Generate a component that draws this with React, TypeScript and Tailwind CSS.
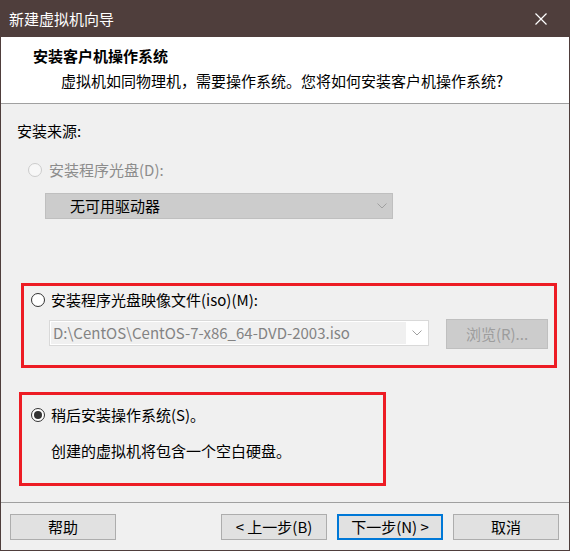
import React from "react";

const font = { fontFamily: '"Microsoft YaHei", "Noto Sans CJK SC", "Noto Sans", sans-serif' };

function Chevron() {
  return (
    <svg width="10" height="6" viewBox="0 0 10 6" className="shrink-0">
      <path d="M0.5 0.5 L5 5 L9.5 0.5" fill="none" stroke="#a0a0a0" strokeWidth="1" />
    </svg>
  );
}

function Radio({ checked = false, disabled = false }: { checked?: boolean; disabled?: boolean }) {
  return (
    <span
      className={
        "w-[14px] h-[14px] rounded-full border flex items-center justify-center shrink-0 " +
        (disabled ? "border-[#cccccc] bg-[#f7f7f7]" : "border-[#333333] bg-white")
      }
    >
      {checked && <span className="w-[8px] h-[8px] rounded-full bg-[#333333]" />}
    </span>
  );
}

function Btn({ children, primary = false }: { children: React.ReactNode; primary?: boolean }) {
  return (
    <div
      className={
        "w-[106px] h-[26px] flex items-center justify-center text-[15px] leading-[20px] text-black bg-[#e1e1e1] " +
        (primary ? "border-2 border-[#0078d7]" : "border border-[#adadad]")
      }
    >
      {children}
    </div>
  );
}

export default function App() {
  return (
    <div
      className="w-[570px] h-[551px] flex flex-col bg-[#f0f0f0] border border-[#4f3e3c] overflow-hidden"
      style={font}
    >
      {/* Title bar */}
      <div className="h-[36px] bg-[#4f3e3c] flex items-center justify-between pl-[8px] pr-[22px] shrink-0">
        <span className="text-white text-[15px] leading-[20px]">新建虚拟机向导</span>
        <svg width="12" height="12" viewBox="0 0 12 12">
          <path d="M0.5 0.5 L11.5 11.5 M11.5 0.5 L0.5 11.5" stroke="#ffffff" strokeWidth="1.2" />
        </svg>
      </div>

      {/* Header */}
      <div className="h-[67px] bg-white border-b border-[#a0a0a0] shrink-0 flex flex-col">
        <div className="pl-[32px] pt-[9px] text-[15px] leading-[20px] font-bold text-black">安装客户机操作系统</div>
        <div className="pl-[60px] pt-[5px] text-[15px] leading-[20px] text-black">
          虚拟机如同物理机，需要操作系统。您将如何安装客户机操作系统?
        </div>
      </div>

      {/* Body */}
      <div className="flex-1 flex flex-col">
        <div className="pl-[16px] mt-[17px] text-[15px] leading-[20px] text-black">安装来源:</div>

        <div className="pl-[27px] mt-[19px] flex items-center gap-[7px] text-[15px] leading-[20px] text-[#8c8c8c]">
          <Radio disabled />
          <span>安装程序光盘(D):</span>
        </div>

        <div className="ml-[44px] mt-[13px] w-[348px] h-[26px] bg-[#cccccc] border border-[#bfbfbf] flex items-center justify-between pl-[24px] pr-[5px]">
          <span className="text-[15px] leading-[20px] text-black">无可用驱动器</span>
          <Chevron />
        </div>

        {/* Red box 1 */}
        <div className="ml-[20px] mt-[64px] w-[536px] h-[85px] border-[3px] border-[#ed1c24] flex flex-col">
          <div className="pl-[7px] mt-[4px] flex items-center gap-[6px] text-[15px] leading-[20px] text-black">
            <Radio />
            <span>安装程序光盘映像文件(iso)(M):</span>
          </div>
          <div className="flex items-start mt-[10px] pl-[25px]">
            <div className="w-[380px] h-[26px] bg-white border border-[#d9d9d9] flex items-center p-[1px]">
              <div className="w-[355px] h-full bg-[#f0f0f0] flex items-center pl-[2px]">
                <span className="text-[15px] leading-[20px] text-[#838383] whitespace-nowrap">D:\CentOS\CentOS-7-x86_64-DVD-2003.iso</span>
              </div>
              <div className="flex-1 flex items-center justify-center">
                <Chevron />
              </div>
            </div>
            <div className="ml-[17px] -mt-[1px] w-[102px] h-[30px] bg-[#cccccc] border border-[#bfbfbf] flex items-center justify-center text-[15px] leading-[20px] text-[#9d9d9d]">
              浏览(R)...
            </div>
          </div>
        </div>

        {/* Red box 2 */}
        <div className="ml-[18px] mt-[24px] w-[367px] h-[94px] border-[3px] border-[#ed1c24] flex flex-col">
          <div className="pl-[9px] mt-[10px] flex items-center gap-[6px] text-[15px] leading-[20px] text-black">
            <Radio checked />
            <span>稍后安装操作系统(S)。</span>
          </div>
          <div className="pl-[29px] mt-[16px] text-[15px] leading-[20px] text-black">创建的虚拟机将包含一个空白硬盘。</div>
        </div>

        <div className="flex-1" />

        {/* Footer */}
        <div className="border-t border-[#a0a0a0] h-[48px] shrink-0 flex items-start pt-[11px] pl-[9px] pr-[10px]">
          <Btn>帮助</Btn>
          <div className="flex-1" />
          <Btn>&lt; 上一步(B)</Btn>
          <div className="w-[10px]" />
          <Btn primary>下一步(N) &gt;</Btn>
          <div className="w-[10px]" />
          <Btn>取消</Btn>
        </div>
      </div>
    </div>
  );
}
